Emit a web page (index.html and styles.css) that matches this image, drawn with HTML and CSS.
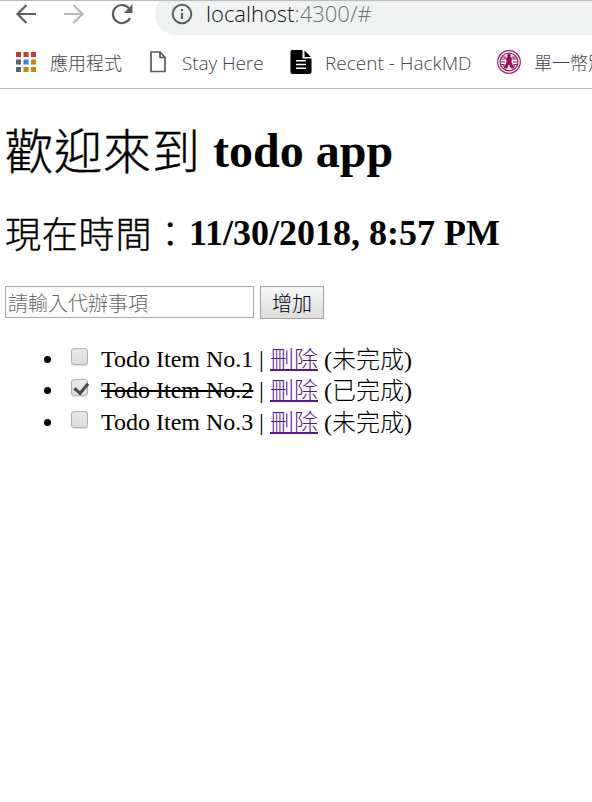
FILE: index.html
```html
<!DOCTYPE html>
<html lang="zh-Hant">
<head>
<meta charset="utf-8">
<title>todo app</title>
<link rel="stylesheet" href="styles.css">
</head>
<body>
<header class="browser">
  <div class="toolbar">
    <svg class="nav" viewBox="0 0 24 24"><path d="M22 12H4M12.5 3L3.5 12L12.5 21"/></svg>
    <svg class="nav nav-off" viewBox="0 0 24 24"><path d="M2 12H20M11.5 3L20.5 12L11.5 21"/></svg>
    <svg class="nav" viewBox="0 0 24 24"><path d="M20 16A9 9 0 1 1 19.4 7"/><path class="solid" d="M22.5 2V11H14Z"/></svg>
    <div class="address">
      <svg class="info" viewBox="0 0 22 22"><circle cx="11" cy="11" r="9.3"/><path d="M11 10V16M11 6V8.2"/></svg>
      <span class="url">localhost<span class="path">:4300/#</span></span>
    </div>
  </div>
  <nav class="bookmarks">
    <svg class="apps" viewBox="0 0 20 20"><path fill="#c53c35" d="M0 0h5v5H0zM7.5 0h5v5h-5zM15 0h5v5h-5z"/><path fill="#5a6865" d="M0 7.5h5v5H0zM0 15h5v5H0z"/><path fill="#2686dc" d="M7.5 7.5h5v5h-5z"/><path fill="#cc820b" d="M15 7.5h5v5h-5zM7.5 15h5v5h-5zM15 15h5v5h-5z"/></svg>
    <span class="mark mark-apps cjk">應用程式</span>
    <svg class="page" viewBox="0 0 16 22"><path d="M1 1H10L15 6.5V20.5H1ZM10 1V6.5H15"/></svg>
    <span class="mark mark-stay">Stay Here</span>
    <svg class="note" viewBox="0 0 22 24"><path d="M2 0H12.5V8.5H21.5V22Q21.5 24 19.5 24H2Q.5 24 .5 22V2Q.5 0 2 0Z"/><path d="M14.5 .5L21 7H14.5Z"/><path class="lines" d="M6 10.8H16M6 14.5H16M6 18.2H16"/></svg>
    <span class="mark mark-recent">Recent - HackMD</span>
    <svg class="bank" viewBox="0 0 24 24"><circle cx="12" cy="12" r="11.3"/><circle cx="12" cy="12" r="8.9"/><path class="solid" d="M10 5L12 3.5L14 5L13.5 7L15 8L14.5 12L17.5 18.5H14L12 14.5L10 18.5H6.5L9.5 12L9 8L10.5 7Z"/><path d="M5 7H8V9H3M3.5 12H8M3.5 14.5H7V17M19 7H16V9H21M20.5 12H16M20.5 14.5H17V17"/></svg>
    <span class="mark mark-bank cjk">單一幣別</span>
  </nav>
</header>
<main>
  <h1><span class="cjk">歡迎來到</span> <span>todo app</span></h1>
  <h2><span class="cjk">現在時間：</span><span>11/30/2018, 8:57 PM</span></h2>
  <form class="entry">
    <input class="field" type="text" placeholder="請輸入代辦事項">
    <button class="add" type="button">增加</button>
  </form>
  <ul class="todos">
    <li><input class="check" type="checkbox"><span class="name">Todo Item No.1</span><span class="bar">|</span><a href="#">刪除</a><span class="state">(未完成)</span></li>
    <li><input class="check" type="checkbox" checked><span class="name"><s>Todo Item No.2</s></span><span class="bar">|</span><a href="#">刪除</a><span class="state">(已完成)</span></li>
    <li><input class="check" type="checkbox"><span class="name">Todo Item No.3</span><span class="bar">|</span><a href="#">刪除</a><span class="state">(未完成)</span></li>
  </ul>
</main>
</body>
</html>
```
FILE: styles.css
```css
* { box-sizing: border-box; }
body { margin: 0; background: #fff; color: #000; font: 24px "Liberation Serif", "Noto Sans CJK TC", serif; font-weight: 300; overflow: hidden; }
svg { display: block; flex: none; fill: none; }
.cjk { font-family: "Noto Sans CJK TC", sans-serif; font-weight: 300; }
.browser { height: 89px; overflow: hidden; border-top: 1px solid #b9b9bb; border-bottom: 1px solid #b4b4b4; }
.toolbar { display: flex; height: 34px; padding-left: 14px; }
.nav { width: 24px; height: 24px; margin: 1px 24px 0 0; stroke: #5a5f63; stroke-width: 2.2; }
.nav .solid { fill: #5a5f63; stroke: none; }
.nav-off { stroke: #b9b9b9; }
.address { display: flex; flex: 1; height: 42px; margin: -8px 0 0 -3px; padding: 10px 0 0 16px; border-radius: 21px 0 0 21px; background: #f0f2f2; }
.info { width: 22px; height: 22px; stroke: #5a5f63; stroke-width: 2; }
.url { margin: -2px 0 0 13px; font: 300 22px/24px "Open Sans", sans-serif; color: #101114; white-space: nowrap; }
.path { color: #68747a; }
.bookmarks { display: flex; align-items: center; height: 53px; padding: 1px 0 0 16px; }
.apps { width: 20px; height: 20px; }
.mark { flex: none; font-family: "Open Sans", "Noto Sans CJK TC", sans-serif; font-size: 19px; line-height: 26px; font-weight: 300; color: #40464b; white-space: nowrap; position: relative; top: 1px; }
.mark.cjk { font-family: "Noto Sans CJK TC", sans-serif; font-size: 18px; top: 0; }
.mark-apps { width: 99px; padding-left: 14px; }
.page { width: 16px; height: 22px; margin-left: 15px; stroke: #555b60; stroke-width: 1.7; }
.mark-stay { width: 109px; margin-left: 16px; letter-spacing: -.1px; }
.note { width: 22px; height: 24px; margin-left: -1px; fill: #000; }
.note .lines { stroke: #fff; stroke-width: 1.4; }
.mark-recent { width: 172px; margin-left: 13px; }
.bank { width: 24px; height: 24px; stroke: #a31963; stroke-width: 1.2; }
.bank .solid { fill: #981052; stroke: none; }
.mark-bank { margin-left: 13px; }
main { padding: 0 5px; }
h1, h2 { display: flex; align-items: flex-start; margin: 0; white-space: nowrap; }
h1 .cjk, h2 .cjk { -webkit-text-stroke: .4px #000; }
h1 { height: 60px; margin-top: 32px; font-size: 48px; line-height: 60px; gap: 12px; }
h1 .cjk { letter-spacing: 1px; line-height: 54px; }
h2 { height: 48px; margin-top: 28px; font-size: 36px; line-height: 48px; }
h2 .cjk { letter-spacing: .8px; line-height: 46px; }
.entry { display: flex; gap: 6px; margin-top: 29px; }
.field { width: 249px; height: 32px; margin: 0; padding: 0 2px; border: 1px solid #a9a9a9; font: 300 20px "Noto Sans CJK TC", sans-serif; outline: 0; }
.field::placeholder { color: #666; opacity: 1; }
.add { width: 64px; height: 33px; padding: 0; border: 1px solid #a6a0a4; background: linear-gradient(#f7f7f7, #ddd); color: #000; font: 300 20px "Noto Sans CJK TC", sans-serif; }
.todos { margin: 25px 0 0; padding: 0 0 0 60px; line-height: 31px; }
.todos li { height: 31px; white-space: nowrap; }
.todos li:nth-child(2) { height: 32px; }
.todos li > * { display: inline-block; height: 31px; vertical-align: top; }
.todos .check { appearance: none; position: relative; width: 17px; height: 17px; margin: 4px 13px 0 6px; border: 1.5px solid #b1b1b1; border-radius: 3px; background: linear-gradient(#e9e9e9, #dcdcdc); box-shadow: 0 1px 1px #ddd; }
.check:checked::after { content: ""; position: absolute; left: 4.5px; top: 0; width: 5.5px; height: 10.5px; border: solid #51453f; border-width: 0 3px 3px 0; transform: rotate(40deg); }
.name { width: 158px; }
.bar { width: 11px; }
.todos a, .state { padding-top: 1px; }
.todos a { width: 54px; color: #551a8b; text-underline-offset: 1px; text-decoration-thickness: 2px; }
s { text-decoration-thickness: 2px; }
```
